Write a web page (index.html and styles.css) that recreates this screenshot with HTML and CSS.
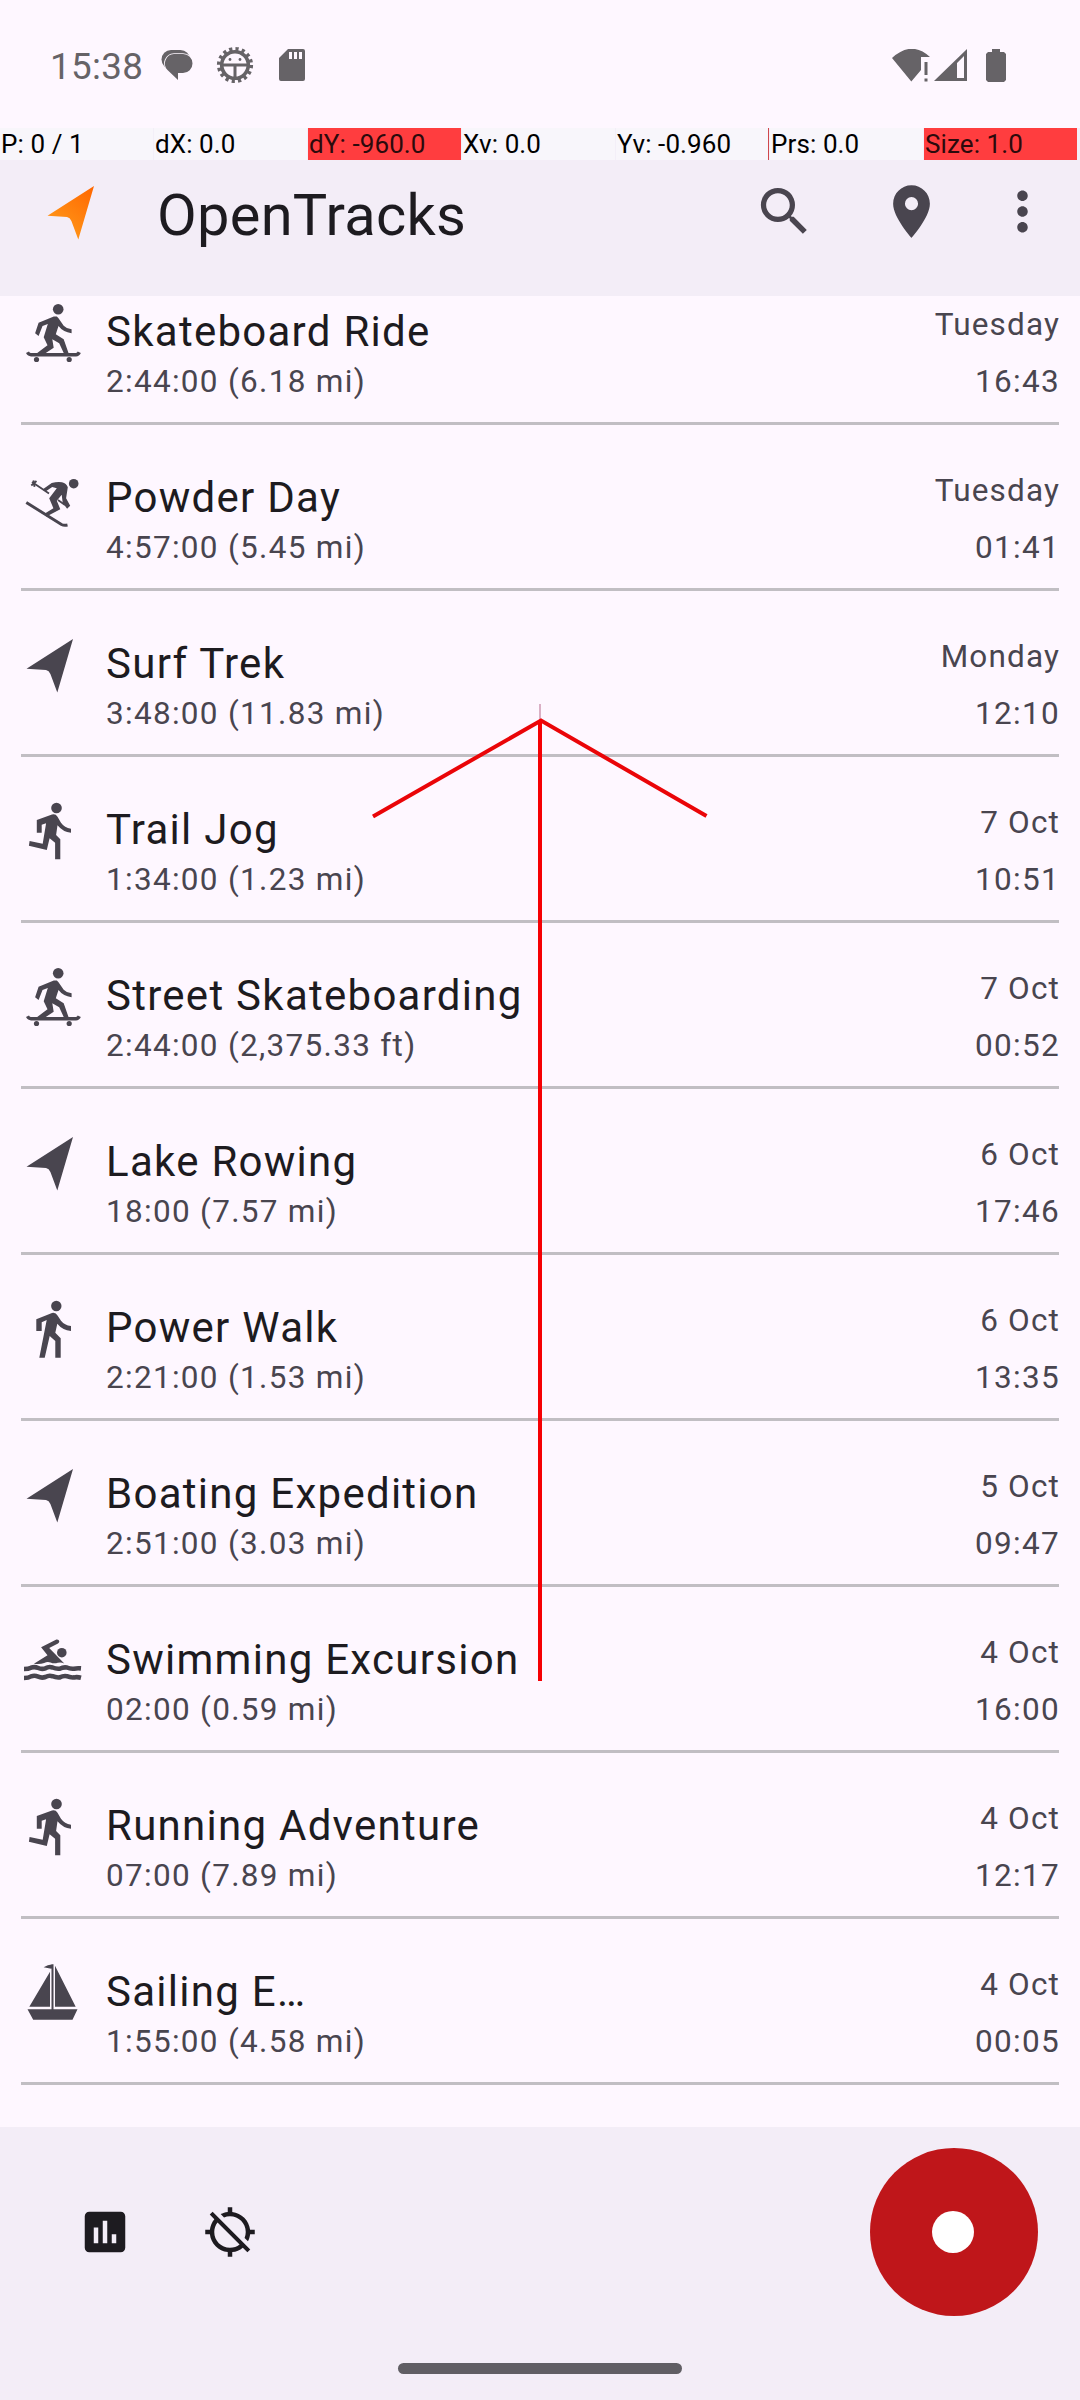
FILE: index.html
```html
<!DOCTYPE html>
<html lang="en">
<head>
<meta charset="utf-8">
<title>OpenTracks</title>
<link rel="stylesheet" href="styles.css">
</head>
<body>
<svg class="sprite" aria-hidden="true">
  <symbol id="arrow" viewBox="0 0 63 63"><path d="M52 5 5.500 34.700 25 36q3 .6 4.400 4l6.900 18.500z"/></symbol>
  <symbol id="skate" viewBox="0 0 63 63">
    <circle cx="37.200" cy="7.300" r="5.300"/>
    <path d="M34 14 17.600 20.700 14.100 31.300 17.600 34 21.500 23.900 26.800 22 22.700 35.300 26.500 43.300 16.200 51h8.600l7.900-5.300-1.400-8.400 6.900 4L42.700 51h4.800L42.700 37.300l-7.900-5 2.700-8.300q4.500 6 13.100 7.300v-4q-5-.5-7.900-3.600l-5.200-7.400q-1.500-2.200-3.500-2.300z"/>
    <path d="M6.500 50.300q1.300 2.400 3.500 2.400h45q2.200 0 3.300-2.400" fill="none" stroke="currentColor" stroke-width="3.400"/>
    <circle cx="15.500" cy="57.500" r="2.600"/><circle cx="48.200" cy="57.500" r="2.600"/>
  </symbol>
  <symbol id="ski" viewBox="0 0 63 63">
    <circle cx="52.700" cy="15.700" r="4.800"/>
    <path d="M21.500 21.500 30.700 15q5.300-1.300 10.300-.7 4.500 1.200 5.800 5l-1.700 11 4.100 7.400-3.100 3-4.400-6-1-8-4.900 6 3.500 8.600L25.500 48.500l-2.500-2.500 9.400-5.700-4.200-10 7.600-10-4.600-1.300-6.700 4.500z"/>
    <path d="M11 14 28 25.500M37 32 44 37M10.300 17.500l5.200-4.500M12.500 12.300l1 6.500" fill="none" stroke="currentColor" stroke-width="1.800"/>
    <path d="M5.300 34.500 40.500 56.500q2.500 1.300 6 .5" fill="none" stroke="currentColor" stroke-width="2.900"/>
  </symbol>
  <symbol id="run" viewBox="0 0 63 63">
    <circle cx="35.500" cy="8" r="5.300"/>
    <path d="M15.800 20 31 14.500q3.500-1 5.500 2.200l3.500 6q3.500 5 10 6v4q-8-.7-13.500-7.500l-1.400 9.800 4.200 4.300v20h-5.200V42.700l-5.500-4.400L25.800 50 7.900 45.700l.7-4.700 13.100 2.700 3.400-20.400-4.400 1.400v8h-4.900z"/>
  </symbol>
  <symbol id="walk" viewBox="0 0 63 63">
    <circle cx="35.300" cy="8" r="5.200"/>
    <path d="M15.300 21.300 31 15q3.700-.8 5.700 2.700l3.300 5q3.500 4.600 10 5.300v5q-8.500-.7-13.700-7.200l-2 8.900 5.400 5.600v19.400h-5.400V43l-5.600-5-5 21.700h-5.400L25.700 22l-5 2.300V33h-5.400z"/>
  </symbol>
  <symbol id="swim" viewBox="0 0 63 63">
    <circle cx="40.800" cy="22.700" r="4.800"/>
    <path d="M20.100 17.300 35.400 9.500q2.600-.3 2.900 1.800 0 1.500-1.300 2.200l-8.800 4.500L43.300 33.500q-3-1.600-6.500-.8-3.500 1.400-7.300-.2-3-1.200-6.300.4-4 1.500-10.300.8l13.600-8.400z"/>
    <path d="M3 39q4.500 0 7.100-1.300 3.500-1.300 7.100.3 3.600 1.600 7.200.3 3.500-2 7.100-.8 3.600 1.600 7.200 1.200 3.600-1.800 7.100-1.200 3.600 1.600 7.200 1.200 3-.7 7-.3M3 48q4.500 0 7.100-1.600 3.500-1.300 7.100.3 3.600 1.600 7.200.3 3.500-2 7.100-.8 3.600 1.600 7.200 1.200 3.600-1.800 7.100-1.200 3.600 1.600 7.200 1.200 3-.7 7 .3" fill="none" stroke="currentColor" stroke-width="4.600"/>
  </symbol>
  <symbol id="sail" viewBox="0 0 63 63">
    <path d="M29 9.700v35H8.300zM34 3.700l20.700 41H34zM6.500 47.300h50l-5 10.400H12.200zM30.500 2.300h2v45h-2zM22.600 5.300q4-2.500 9-3v4.600z"/>
  </symbol>
</svg>

<header class="status">
  <div class="status-side">
    <span class="clock">15:38</span>
    <svg class="s-msg" width="32" height="30" viewBox="0 0 32 30"><rect x=".5" width="28.500" height="19" rx="9.500"/><path class="halo" d="M13 4h9a9.200 9.200 0 0 1 0 19h-5v7L6.500 20A9.500 9.500 0 0 1 13 4z"/></svg>
    <svg class="s-gear" width="38" height="38" viewBox="0 0 38 38"><circle cx="19" cy="19" r="13.300" fill="none" stroke="currentColor" stroke-width="3.600"/><circle cx="19" cy="19" r="16.200" fill="none" stroke="currentColor" stroke-width="3.800" stroke-dasharray="3.180 3.180"/><path d="M6.500 17.500h25v3h-25zM17.500 19h3v13h-3z"/><circle cx="14" cy="13.500" r="1.400"/><circle cx="24" cy="13.500" r="1.400"/></svg>
    <svg class="s-sd" width="26" height="32" viewBox="0 0 26 32"><path fill-rule="evenodd" d="M9 0h15q2 0 2 2v28q0 2-2 2H2q-2 0-2-2V9zM10 3v7h3V3zM15 3v7h3V3zM20 3v7h3V3z"/></svg>
  </div>
  <div class="status-side">
    <svg width="38" height="33" viewBox="0 0 38 33"><path d="M0 9Q19.500-9 38 8h-9v13l-9.700 11.500zM32.500 13h3v13h-3zM32.500 29.500h3v3h-3z"/></svg>
    <svg class="s-cell" width="33" height="32" viewBox="0 0 33 32"><path fill-rule="evenodd" d="M0 32 33 0v32zM23 14v15h7V7z"/></svg>
    <svg class="s-batt" width="20" height="33" viewBox="0 0 20 33"><path d="M6 0h8v3h4l2 2v26l-2 2H2l-2-2V5l2-2h4z"/></svg>
  </div>
</header>

<div class="pointer-bar">
  <span class="cell">P: 0 / 1</span><span class="cell">dX: 0.0</span><span class="cell hot">dY: -960.0</span><span class="cell">Xv: 0.0</span><span class="cell mark">Yv: -0.960</span><span class="cell">Prs: 0.0</span><span class="cell hot">Size: 1.0</span>
</div>

<nav class="toolbar">
  <svg class="logo" width="63" height="63" viewBox="0 0 63 63"><defs><linearGradient id="lg" x1="1" y1="0" x2=".3" y2="1"><stop offset="0" stop-color="#ff6600"/><stop offset="1" stop-color="#ff9a1a"/></linearGradient></defs><path fill="url(#lg)" d="M52 5 5.500 34.700 25 36q3 .6 4.400 4l6.900 18.500z"/></svg>
  <h1 class="title">OpenTracks</h1>
  <svg class="act" viewBox="0 0 24 24"><path d="M15.500 14h-.79l-.28-.27A6.471 6.471 0 0 0 16 9.500 6.500 6.500 0 1 0 9.500 16c1.610 0 3.090-.59 4.230-1.570l.27.28v.79l5 4.990L20.490 19l-4.990-5zm-6 0C7.010 14 5 11.990 5 9.500S7.010 5 9.500 5 14 7.010 14 9.500 11.990 14 9.500 14z"/></svg>
  <svg class="act pin" viewBox="0 0 24 24"><path d="M12 2C8.130 2 5 5.130 5 9c0 5.250 7 13 7 13s7-7.750 7-13c0-3.870-3.130-7-7-7zm0 9.500a2.500 2.500 0 0 1 0-5 2.500 2.500 0 0 1 0 5z"/></svg>
  <svg class="act more" viewBox="0 0 24 24"><path d="M12 8c1.100 0 2-.9 2-2s-.9-2-2-2-2 .9-2 2 .9 2 2 2zm0 2c-1.100 0-2 .9-2 2s.9 2 2 2 2-.9 2-2-.9-2-2-2zm0 6c-1.100 0-2 .9-2 2s.9 2 2 2 2-.9 2-2-.9-2-2-2z"/></svg>
</nav>

<main class="tracks">
  <article class="track"><svg class="kind"><use href="#skate"/></svg><div class="info"><h2>Skateboard Ride</h2><p>2:44:00 (6.18 mi)</p></div><div class="when"><span>Tuesday</span><span>16:43</span></div></article>
  <article class="track"><svg class="kind"><use href="#ski"/></svg><div class="info"><h2>Powder Day</h2><p>4:57:00 (5.45 mi)</p></div><div class="when"><span>Tuesday</span><span>01:41</span></div></article>
  <article class="track"><svg class="kind"><use href="#arrow"/></svg><div class="info"><h2>Surf Trek</h2><p>3:48:00 (11.83 mi)</p></div><div class="when"><span>Monday</span><span>12:10</span></div></article>
  <article class="track"><svg class="kind"><use href="#run"/></svg><div class="info"><h2>Trail Jog</h2><p>1:34:00 (1.23 mi)</p></div><div class="when"><span>7 Oct</span><span>10:51</span></div></article>
  <article class="track"><svg class="kind"><use href="#skate"/></svg><div class="info"><h2>Street Skateboarding</h2><p>2:44:00 (2,375.33 ft)</p></div><div class="when"><span>7 Oct</span><span>00:52</span></div></article>
  <article class="track"><svg class="kind"><use href="#arrow"/></svg><div class="info"><h2>Lake Rowing</h2><p>18:00 (7.57 mi)</p></div><div class="when"><span>6 Oct</span><span>17:46</span></div></article>
  <article class="track"><svg class="kind"><use href="#walk"/></svg><div class="info"><h2>Power Walk</h2><p>2:21:00 (1.53 mi)</p></div><div class="when"><span>6 Oct</span><span>13:35</span></div></article>
  <article class="track"><svg class="kind"><use href="#arrow"/></svg><div class="info"><h2>Boating Expedition</h2><p>2:51:00 (3.03 mi)</p></div><div class="when"><span>5 Oct</span><span>09:47</span></div></article>
  <article class="track"><svg class="kind"><use href="#swim"/></svg><div class="info"><h2>Swimming Excursion</h2><p>02:00 (0.59 mi)</p></div><div class="when"><span>4 Oct</span><span>16:00</span></div></article>
  <article class="track"><svg class="kind"><use href="#run"/></svg><div class="info"><h2>Running Adventure</h2><p>07:00 (7.89 mi)</p></div><div class="when"><span>4 Oct</span><span>12:17</span></div></article>
  <article class="track"><svg class="kind"><use href="#sail"/></svg><div class="info"><h2>Sailing E…</h2><p>1:55:00 (4.58 mi)</p></div><div class="when"><span>4 Oct</span><span>00:05</span></div></article>
</main>

<footer class="bottom">
  <div class="actions">
    <svg class="tool" viewBox="0 0 24 24"><path d="M19 3H5c-1.100 0-2 .9-2 2v14c0 1.100.9 2 2 2h14c1.100 0 2-.9 2-2V5c0-1.100-.9-2-2-2zM9 17H7v-7h2v7zm4 0h-2V7h2v10zm4 0h-2v-4h2v4z"/></svg>
    <svg class="tool gps" viewBox="0 0 24 24"><path d="M20.940 11c-.46-4.170-3.770-7.480-7.940-7.940V1h-2v2.060c-1.130.12-2.190.46-3.160.97l1.500 1.500C10.160 5.190 11.060 5 12 5c3.870 0 7 3.130 7 7 0 .94-.19 1.840-.52 2.650l1.500 1.500c.5-.96.840-2.020.97-3.150H23v-2h-2.060zM3 4.270l2.040 2.040C3.970 7.620 3.250 9.230 3.060 11H1v2h2.060c.46 4.170 3.770 7.480 7.940 7.940V23h2v-2.060c1.770-.2 3.380-.91 4.690-1.980L19.730 21 21 19.730 4.270 3 3 4.270zm13.270 13.270C15.090 18.450 13.610 19 12 19c-3.870 0-7-3.130-7-7 0-1.610.55-3.090 1.460-4.270l9.810 9.810z"/></svg>
    <button class="record" aria-label="Record"><span class="dot"></span></button>
  </div>
  <div class="pill"></div>
</footer>

<!-- Swipe trace of the current touch gesture -->
<svg class="trace" width="360" height="1000" viewBox="360 700 360 1000">
  <path d="M540 704v18" stroke="#dab0c5" stroke-width="2"/>
  <path d="M373 816.500 541 720.500 706.500 816" stroke="#ea0508" stroke-width="4" fill="none"/>
  <path d="M540 720v961" stroke="#f60004" stroke-width="4"/>
</svg>
</body>
</html>
```
FILE: styles.css
```css
* { box-sizing: border-box; margin: 0; padding: 0; }
body {
  width: 1080px;
  height: 2400px;
  position: relative;
  display: flex;
  flex-direction: column;
  overflow: hidden;
  background: #fef7ff;
  font-family: Roboto, "Liberation Sans", sans-serif;
  color: #1d1b20;
}
svg { display: block; flex: none; fill: currentColor; }
.sprite { position: absolute; width: 0; height: 0; }

/* Status bar */
.status {
  height: 128px;
  padding: 2px 74px 0 50px;
  display: flex;
  justify-content: space-between;
  align-items: center;
  color: #666367;
}
.status-side { display: flex; align-items: center; }
.clock { width: 111px; font-size: 36.75px; line-height: 44px; padding-top: 3px; letter-spacing: .35px; }
.halo { stroke: #fef7ff; stroke-width: 1.6; paint-order: stroke; }
.s-gear { margin-left: 23px; }
.s-sd { margin-left: 25px; }
.s-cell { margin-left: 4px; }
.s-batt { margin-left: 19px; }

/* Pointer readout */
.pointer-bar {
  height: 32px;
  display: grid;
  grid-template-columns: repeat(7, 153px);
  column-gap: 1px;
  background: #f3eff8;
  font-size: 26px;
  line-height: 32px;
  letter-spacing: .1px;
  color: #000;
}
.cell { padding-left: 1px; background: #f8f6fb; white-space: nowrap; }
.hot { background: #ff3d3f; color: #2c0a0c; }
.mark { border-right: 1px solid #d0474c; }

/* App bar */
.toolbar {
  height: 136px;
  padding: 20px 26px 0 42px;
  display: flex;
  align-items: flex-start;
  background: #f3edf7;
  color: #49454f;
}
.logo { margin-top: 1px; }
.title {
  flex: 1;
  margin-left: 52px;
  padding-top: 2px;
  font-size: 57.75px;
  line-height: 66px;
  font-weight: 400;
  letter-spacing: .3px;
  color: #1d1b20;
}
.act { width: 63px; height: 63px; }
.pin { margin-left: 64px; }
.more { margin-left: 48px; }

/* Track list */
.tracks {
  height: 1831px;
  padding: 0 21px 42px;
  display: flex;
  flex-direction: column;
  justify-content: flex-end;
  overflow: hidden;
}
.track {
  flex: none;
  height: 166px;
  display: flex;
  align-items: flex-start;
  border-bottom: 3px solid #c1bec3;
  color: #49454f;
}
.kind { width: 63px; height: 63px; margin-top: 43px; }
.info { flex: 1; margin-left: 22px; padding-top: 48px; }
.info h2 {
  font-size: 42px;
  line-height: 50px;
  font-weight: 400;
  letter-spacing: 1.27px;
  color: #1d1b20;
}
.info p, .when {
  font-size: 31.5px;
  line-height: 44px;
  letter-spacing: 1.15px;
}
.info p { margin-top: 3px; letter-spacing: 1.3px; }
.when {
  margin-right: -1px;
  padding-top: 44px;
  display: flex;
  flex-direction: column;
  align-items: flex-end;
  gap: 13px;
}
.when span + span { letter-spacing: 1.3px; }

/* Bottom bar */
.bottom { height: 273px; background: #f3edf7; }
.actions { height: 236px; padding: 21px 42px 0 77.5px; display: flex; align-items: flex-start; }
.tool { width: 54px; height: 54px; margin-top: 57px; }
.gps { margin-left: 71px; }
.record {
  width: 168px;
  height: 168px;
  margin-left: auto;
  padding-right: 2px;
  display: flex;
  align-items: center;
  justify-content: center;
  border: 0;
  border-radius: 50%;
  background: #bf161a;
}
.dot { width: 42px; height: 42px; border-radius: 50%; background: #fff; }
.pill { width: 284px; height: 11px; margin: 0 auto; border-radius: 6px; background: #605e64; }

.trace { position: absolute; left: 360px; top: 700px; pointer-events: none; }
```
